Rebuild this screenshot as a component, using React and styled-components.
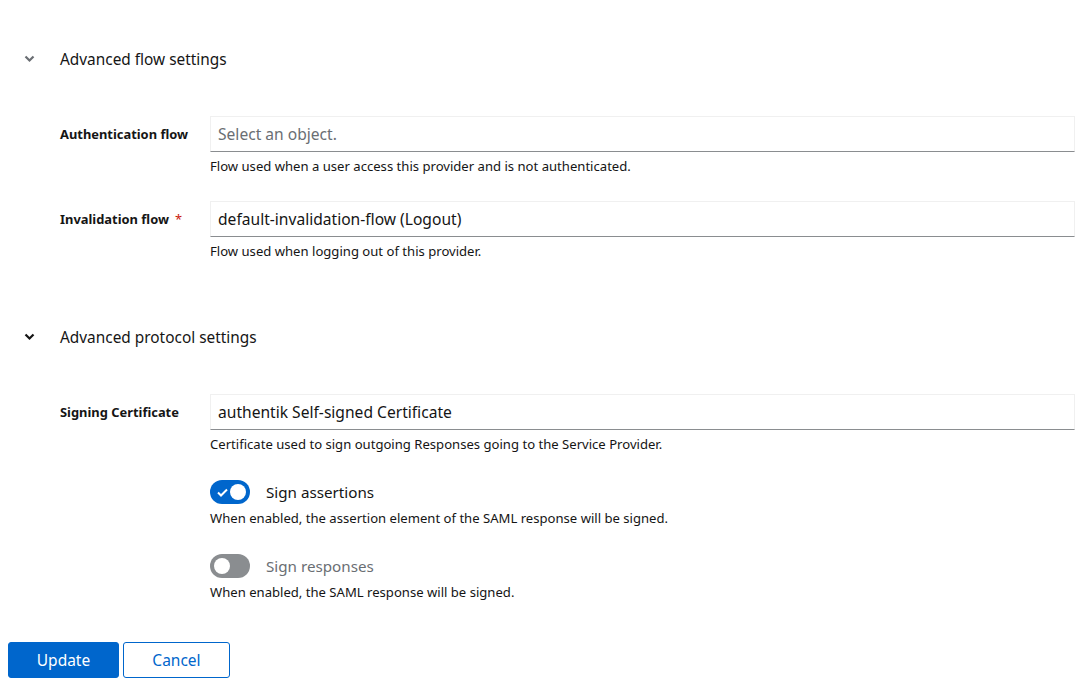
import React from 'react'
import styled, { createGlobalStyle } from 'styled-components'

const GlobalStyle = createGlobalStyle`
    body {
        margin: 0;
        background: #fff;
        font-family: "Noto Sans", "Liberation Sans", sans-serif;
        color: #151515;
    }
`

const Page = styled.div`
    padding: 0 15px 0 8px;
`

const Section = styled.section`
    padding-top: ${props => props.first ? '47px' : '65px'};
`

const SectionHeader = styled.div`
    display: flex;
    align-items: center;
    height: 24px;
    padding-left: 16px;
    font-size: 15.4px;
`

const Chevron = styled.span`
    display: flex;
    width: 36px;
    color: ${props => props.muted ? '#6a6e73' : '#151515'};
`

const FormBody = styled.div`
    padding: 45px 0 0 52px;
    display: grid;
    grid-template-columns: 150px 1fr;
    row-gap: 26px;
`

const Label = styled.label`
    font-size: 12.9px;
    font-weight: 700;
    line-height: 36px;
`

const Required = styled.span`
    color: #c9190b;
    margin-left: 6px;
    font-weight: 400;
`

const Field = styled.div`
    display: flex;
    flex-direction: column;
`

const Input = styled.div`
    height: 36px;
    box-sizing: border-box;
    border: 1px solid #f0f0f0;
    border-bottom-color: #8a8d90;
    padding: 0 7px;
    display: flex;
    align-items: center;
    font-size: 15.6px;
    color: ${props => props.placeholder ? '#6a6e73' : '#151515'};
`

const Helper = styled.div`
    font-size: 13.1px;
    margin-top: 5px;
    line-height: 18px;
`

const SwitchRow = styled.div`
    display: flex;
    align-items: center;
    gap: 16px;
    margin-top: ${props => props.gap}px;
    font-size: 15.2px;
    color: ${props => props.on ? '#151515' : '#6a6e73'};
`

const Track = styled.span`
    width: 40px;
    height: 24px;
    border-radius: 12px;
    background: ${props => props.on ? '#0066cc' : '#8a8d90'};
    display: flex;
    align-items: center;
    justify-content: ${props => props.on ? 'flex-end' : 'flex-start'};
    padding: 0 4px;
    box-sizing: border-box;
    position: relative;
`

const Knob = styled.span`
    width: 16px;
    height: 16px;
    border-radius: 50%;
    background: #fff;
`

const Check = styled.svg`
    position: absolute;
    left: 7px;
    top: 8px;
`

const Actions = styled.div`
    display: flex;
    gap: 4px;
    padding-top: 41px;
`

const Button = styled.button`
    height: 36px;
    width: ${props => props.w}px;
    border-radius: 3px;
    font-family: inherit;
    font-size: 15.5px;
    background: ${props => props.primary ? '#0066cc' : '#fff'};
    color: ${props => props.primary ? '#fff' : '#0066cc'};
    border: 1px solid #0066cc;
    cursor: pointer;
`

const ChevronIcon = () => (
    <svg width="11" height="8" viewBox="0 0 11 8">
        <path d="M1.5 1.5 L5.5 5.5 L9.5 1.5" stroke="currentColor" strokeWidth="2.2" fill="none" />
    </svg>
)

const Toggle = ({ on }) => (
    <Track on={on}>
        {on && (
            <Check width="11" height="9" viewBox="0 0 11 9">
                <path d="M1 4.5 L4 7.5 L10 1.5" stroke="#fff" strokeWidth="2" fill="none" />
            </Check>
        )}
        <Knob />
    </Track>
)

const App = () => {
    return (
        <Page>
            <GlobalStyle />
            <Section first>
                <SectionHeader>
                    <Chevron muted><ChevronIcon /></Chevron>
                    Advanced flow settings
                </SectionHeader>
                <FormBody>
                    <Label>Authentication flow</Label>
                    <Field>
                        <Input placeholder="true">Select an object.</Input>
                        <Helper>Flow used when a user access this provider and is not authenticated.</Helper>
                    </Field>
                    <Label>Invalidation flow<Required>*</Required></Label>
                    <Field>
                        <Input>default-invalidation-flow (Logout)</Input>
                        <Helper>Flow used when logging out of this provider.</Helper>
                    </Field>
                </FormBody>
            </Section>
            <Section>
                <SectionHeader>
                    <Chevron><ChevronIcon /></Chevron>
                    Advanced protocol settings
                </SectionHeader>
                <FormBody>
                    <Label>Signing Certificate</Label>
                    <Field>
                        <Input>authentik Self-signed Certificate</Input>
                        <Helper>Certificate used to sign outgoing Responses going to the Service Provider.</Helper>
                        <SwitchRow on gap={27}>
                            <Toggle on />
                            Sign assertions
                        </SwitchRow>
                        <Helper>When enabled, the assertion element of the SAML response will be signed.</Helper>
                        <SwitchRow gap={27}>
                            <Toggle />
                            Sign responses
                        </SwitchRow>
                        <Helper>When enabled, the SAML response will be signed.</Helper>
                    </Field>
                </FormBody>
            </Section>
            <Actions>
                <Button primary w={111}>Update</Button>
                <Button w={107}>Cancel</Button>
            </Actions>
        </Page>
    )
}

export default App
